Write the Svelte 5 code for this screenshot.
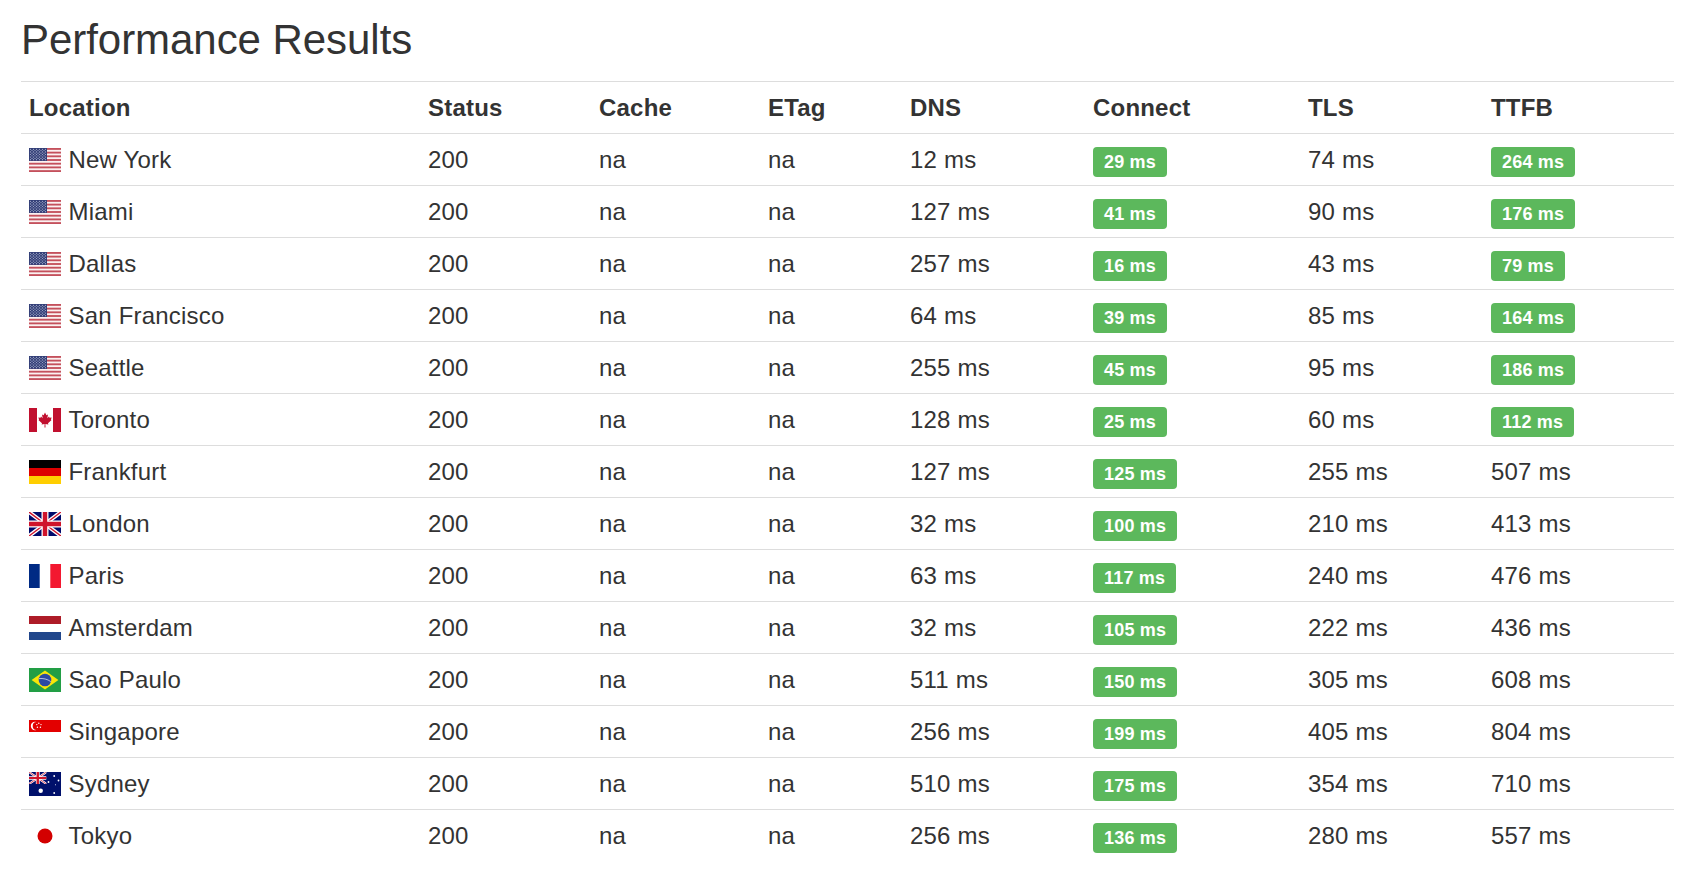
<script>
  const rows = [
    ['us','New York','12 ms',[29,1],'74 ms',[264,1]],
    ['us','Miami','127 ms',[41,1],'90 ms',[176,1]],
    ['us','Dallas','257 ms',[16,1],'43 ms',[79,1]],
    ['us','San Francisco','64 ms',[39,1],'85 ms',[164,1]],
    ['us','Seattle','255 ms',[45,1],'95 ms',[186,1]],
    ['ca','Toronto','128 ms',[25,1],'60 ms',[112,1]],
    ['de','Frankfurt','127 ms',[125,1],'255 ms',[507,0]],
    ['gb','London','32 ms',[100,1],'210 ms',[413,0]],
    ['fr','Paris','63 ms',[117,1],'240 ms',[476,0]],
    ['nl','Amsterdam','32 ms',[105,1],'222 ms',[436,0]],
    ['br','Sao Paulo','511 ms',[150,1],'305 ms',[608,0]],
    ['sg','Singapore','256 ms',[199,1],'405 ms',[804,0]],
    ['au','Sydney','510 ms',[175,1],'354 ms',[710,0]],
    ['jp','Tokyo','256 ms',[136,1],'280 ms',[557,0]]
  ];
  const widths = [399,171,169,142,183,215,183,191];
  const heads = ['Location','Status','Cache','ETag','DNS','Connect','TLS','TTFB'];
  const stripes = [0,2,4,6,8,10,12];
  const dots = [];
  for (let y = 0; y < 9; y++) for (let x = 0; x < (y % 2 ? 5 : 6); x++) dots.push([(y % 2 ? 3 : 1.5) + x * 3, 1.3 + y * 1.3]);
</script>

{#snippet union(w, h)}
  <svg x="0" y="0" width={w} height={h} viewBox="0 0 32 24" preserveAspectRatio="none">
    <rect width="32" height="24" fill="#000a6b"/>
    <path d="M0 0L32 24M32 0L0 24" stroke="#fff" stroke-width="4"/>
    <path d="M0 0L32 24M32 0L0 24" stroke="#cf142b" stroke-width="1.4"/>
    <path d="M16 0V24M0 12H32" stroke="#fff" stroke-width="7"/>
    <path d="M16 0V24M0 12H32" stroke="#cf142b" stroke-width="4.4"/>
  </svg>
{/snippet}

{#snippet star(cx, cy, r)}
  <circle {cx} {cy} {r} fill="#fff"/>
{/snippet}

{#snippet flag(c)}
  <svg class="flag" width="32" height="24" viewBox="0 0 32 24" aria-hidden="true">
    {#if c === 'us'}
      <rect width="32" height="24" fill="#fbf1f1"/>
      {#each stripes as s}
        <rect y={s * 24 / 13} width="32" height={24 / 13} fill="#c4505c"/>
      {/each}
      <rect width="18" height={24 * 7 / 13} fill="#333f78"/>
      {#each dots as d}
        <circle cx={d[0]} cy={d[1]} r="0.6" fill="#c4cbe0" opacity="0.8"/>
      {/each}
    {:else if c === 'ca'}
      <rect width="32" height="24" fill="#fff"/>
      <rect width="8" height="24" fill="#c1102f"/>
      <rect x="24" width="8" height="24" fill="#c1102f"/>
      <path d="M16 4.500L17.400 7.200L19 6.400L18.300 10.200L20 8.400L20.500 9.800L22.600 9.400L21.900 11.700L22.600 12.100L19 15.200L19.400 16.400L16.400 16L16.500 19.500H15.500L15.600 16L12.600 16.400L13 15.200L9.400 12.100L10.100 11.700L9.400 9.400L11.500 9.800L12 8.400L13.700 10.200L13 6.400L14.600 7.200Z" fill="#c1102f"/>
    {:else if c === 'de'}
      <rect width="32" height="8" fill="#000"/>
      <rect y="8" width="32" height="8" fill="#d00"/>
      <rect y="16" width="32" height="8" fill="#ffce00"/>
    {:else if c === 'gb'}
      {@render union(32, 24)}
    {:else if c === 'fr'}
      <rect width="32" height="24" fill="#fff"/>
      <rect width="10.7" height="24" fill="#002a84"/>
      <rect x="21.3" width="10.7" height="24" fill="#f31830"/>
    {:else if c === 'nl'}
      <rect y="0" width="32" height="8" fill="#ae1c28"/>
      <rect y="8" width="32" height="8" fill="#fff"/>
      <rect y="16" width="32" height="8" fill="#21468b"/>
    {:else if c === 'br'}
      <rect width="32" height="24" fill="#229e45"/>
      <path d="M16 2.6L29.4 12 16 21.4 2.6 12z" fill="#f8e509"/>
      <circle cx="16" cy="12" r="6.3" fill="#2b49a3"/>
      <path d="M10 10.6c4-.5 8.400.5 11.800 3" fill="none" stroke="#fff" stroke-width="0.8" opacity="0.8"/>
    {:else if c === 'sg'}
      <rect width="32" height="12" fill="#e30000"/>
      <circle cx="6" cy="6" r="4.200" fill="#fff"/>
      <circle cx="7.600" cy="6" r="3.900" fill="#e30000"/>
      <circle cx="9.800" cy="3.300" r=".7" fill="#fff"/>
      <circle cx="12" cy="4.600" r=".7" fill="#fff"/>
      <circle cx="11.400" cy="7.200" r=".7" fill="#fff"/>
      <circle cx="8.400" cy="7.200" r=".7" fill="#fff"/>
      <circle cx="7.800" cy="4.600" r=".7" fill="#fff"/>
    {:else if c === 'au'}
      <rect width="32" height="24" fill="#00106b"/>
      {@render union(17.500, 12)}
      {@render star(11.700, 18.800, 2.200)}
      {@render star(25.200, 4, 0.900)}
      {@render star(19.500, 10, 0.900)}
      {@render star(29.500, 8.500, 0.900)}
      {@render star(25.200, 21, 0.900)}
      {@render star(26.500, 12.800, 0.500)}
    {:else if c === 'jp'}
      <circle cx="16" cy="12" r="7.500" fill="#d30000"/>
    {/if}
  </svg>
{/snippet}

<main class="page">
  <h1>Performance Results</h1>
  <table>
    <colgroup>
      {#each widths as w}
        <col style:width="{w}px"/>
      {/each}
    </colgroup>
    <thead>
      <tr>
        {#each heads as h}
          <th>{h}</th>
        {/each}
      </tr>
    </thead>
    <tbody>
      {#each rows as r}
        <tr>
          <td><span class="loc">{@render flag(r[0])}<span>{r[1]}</span></span></td>
          <td>200</td>
          <td>na</td>
          <td>na</td>
          <td>{r[2]}</td>
          <td><span class="badge">{r[3][0]} ms</span></td>
          <td>{r[4]}</td>
          <td>
            {#if r[5][1]}
              <span class="badge">{r[5][0]} ms</span>
            {:else}
              {r[5][0]} ms
            {/if}
          </td>
        </tr>
      {/each}
    </tbody>
  </table>
</main>

<style>
  :global(body) {
    margin: 0;
    background: #fff;
    color: #333;
    font-family: "Liberation Sans", Arial, sans-serif;
  }
  .page {
    padding: 0 12px 0 21px;
  }
  h1 {
    margin: 0;
    padding-top: 17px;
    height: 81px;
    box-sizing: border-box;
    font-size: 42px;
    font-weight: 400;
    line-height: 46px;
    letter-spacing: -0.05px;
  }
  table {
    width: 1653px;
    table-layout: fixed;
    border-collapse: separate;
    border-spacing: 0;
    font-size: 24px;
    letter-spacing: 0.2px;
  }
  th, td {
    height: 52px;
    box-sizing: border-box;
    padding: 8px;
    border-top: 1px solid #ddd;
    text-align: left;
    vertical-align: top;
    line-height: 35px;
    overflow: hidden;
    white-space: nowrap;
  }
  th {
    font-weight: 700;
  }
  .loc {
    display: flex;
    align-items: flex-start;
    gap: 7.5px;
  }
  .flag {
    flex: none;
    display: block;
    margin-top: 6px;
  }
  .badge {
    display: inline-block;
    padding: 6px 11px;
    border-radius: 4px;
    background: #5cb85c;
    color: #fff;
    font-size: 18px;
    font-weight: 700;
    line-height: 18px;
  }
</style>
